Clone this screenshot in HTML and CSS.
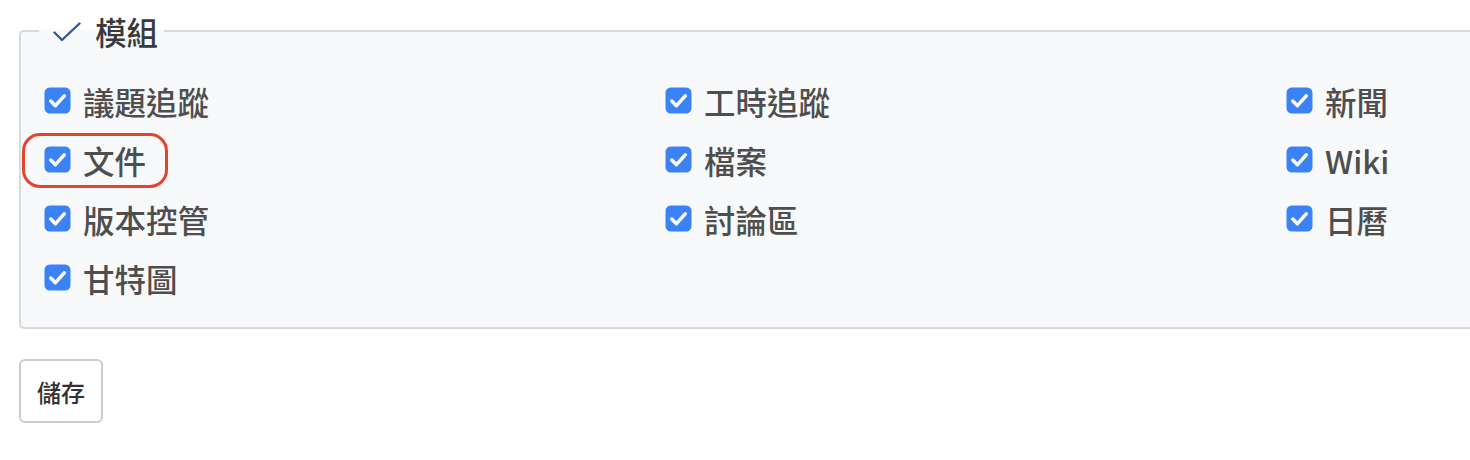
FILE: index.html
```html
<!DOCTYPE html>
<html lang="zh-Hant">
<head>
<meta charset="utf-8">
<title>模組</title>
<link rel="stylesheet" href="styles.css">
</head>
<body>
<form class="page">
  <fieldset class="box">
    <legend class="legend">
      <svg class="legend-icon" width="28" height="20" viewBox="0 0 28 20"><path d="M1.5 10.5 L9 18 L26.5 1.5" fill="none" stroke="#2d5d8e" stroke-width="2.4" stroke-linecap="round" stroke-linejoin="round"/></svg>
      <span>模組</span>
    </legend>
    <div class="grid">
      <label class="item"><svg class="cb" viewBox="0 0 26 26"><rect x="0.5" y="0.5" width="25" height="25" rx="5" fill="#3a82f5"/><path d="M6.5 13.5 L11 18 L19.5 8.5" fill="none" stroke="#fff" stroke-width="3.4" stroke-linecap="round" stroke-linejoin="round"/></svg><span>議題追蹤</span></label>
      <label class="item"><svg class="cb" viewBox="0 0 26 26"><rect x="0.5" y="0.5" width="25" height="25" rx="5" fill="#3a82f5"/><path d="M6.5 13.5 L11 18 L19.5 8.5" fill="none" stroke="#fff" stroke-width="3.4" stroke-linecap="round" stroke-linejoin="round"/></svg><span>工時追蹤</span></label>
      <label class="item"><svg class="cb" viewBox="0 0 26 26"><rect x="0.5" y="0.5" width="25" height="25" rx="5" fill="#3a82f5"/><path d="M6.5 13.5 L11 18 L19.5 8.5" fill="none" stroke="#fff" stroke-width="3.4" stroke-linecap="round" stroke-linejoin="round"/></svg><span>新聞</span></label>
      <label class="item"><svg class="cb" viewBox="0 0 26 26"><rect x="0.5" y="0.5" width="25" height="25" rx="5" fill="#3a82f5"/><path d="M6.5 13.5 L11 18 L19.5 8.5" fill="none" stroke="#fff" stroke-width="3.4" stroke-linecap="round" stroke-linejoin="round"/></svg><span>文件</span><span class="mark"></span></label>
      <label class="item"><svg class="cb" viewBox="0 0 26 26"><rect x="0.5" y="0.5" width="25" height="25" rx="5" fill="#3a82f5"/><path d="M6.5 13.5 L11 18 L19.5 8.5" fill="none" stroke="#fff" stroke-width="3.4" stroke-linecap="round" stroke-linejoin="round"/></svg><span>檔案</span></label>
      <label class="item"><svg class="cb" viewBox="0 0 26 26"><rect x="0.5" y="0.5" width="25" height="25" rx="5" fill="#3a82f5"/><path d="M6.5 13.5 L11 18 L19.5 8.5" fill="none" stroke="#fff" stroke-width="3.4" stroke-linecap="round" stroke-linejoin="round"/></svg><span>Wiki</span></label>
      <label class="item"><svg class="cb" viewBox="0 0 26 26"><rect x="0.5" y="0.5" width="25" height="25" rx="5" fill="#3a82f5"/><path d="M6.5 13.5 L11 18 L19.5 8.5" fill="none" stroke="#fff" stroke-width="3.4" stroke-linecap="round" stroke-linejoin="round"/></svg><span>版本控管</span></label>
      <label class="item"><svg class="cb" viewBox="0 0 26 26"><rect x="0.5" y="0.5" width="25" height="25" rx="5" fill="#3a82f5"/><path d="M6.5 13.5 L11 18 L19.5 8.5" fill="none" stroke="#fff" stroke-width="3.4" stroke-linecap="round" stroke-linejoin="round"/></svg><span>討論區</span></label>
      <label class="item"><svg class="cb" viewBox="0 0 26 26"><rect x="0.5" y="0.5" width="25" height="25" rx="5" fill="#3a82f5"/><path d="M6.5 13.5 L11 18 L19.5 8.5" fill="none" stroke="#fff" stroke-width="3.4" stroke-linecap="round" stroke-linejoin="round"/></svg><span>日曆</span></label>
      <label class="item"><svg class="cb" viewBox="0 0 26 26"><rect x="0.5" y="0.5" width="25" height="25" rx="5" fill="#3a82f5"/><path d="M6.5 13.5 L11 18 L19.5 8.5" fill="none" stroke="#fff" stroke-width="3.4" stroke-linecap="round" stroke-linejoin="round"/></svg><span>甘特圖</span></label>
    </div>
  </fieldset>
  <button type="button" class="save">儲存</button>
</form>
</body>
</html>
```

FILE: styles.css
```css
html, body {
  margin: 0;
  padding: 0;
  background: #ffffff;
}
body {
  font-family: "Noto Sans CJK TC", "Noto Sans", sans-serif;
  color: #4a4a4a;
}
.page {
  padding: 11px 0 0 19px;
  margin: 0;
}
.box {
  width: 1451px;
  margin: 0;
  padding: 20px 0 20px 23px;
  border: 2px solid #d6d9de;
  border-right: 0;
  border-radius: 5px 0 0 5px;
  background: #f8f9fb;
  box-sizing: border-box;
}
.legend {
  display: flex;
  align-items: center;
  gap: 14px;
  padding: 0 6px 0 14px;
  margin-left: -5px;
  height: 40px;
  font-size: 31.5px;
  font-weight: 500;
  line-height: 40px;
  color: #3a3a3a;
}
.legend-icon {
  display: block;
  margin-top: 2px;
}
.grid {
  display: grid;
  grid-template-columns: 621px 621px 1fr;
  grid-auto-rows: 59px;
}
.item {
  position: relative;
  display: flex;
  align-items: center;
  gap: 12px;
  font-size: 31.5px;
  font-weight: 500;
  line-height: 40px;
  color: #4e4e4e;
}
.cb {
  width: 27px;
  height: 27px;
  flex: none;
}
.mark {
  position: absolute;
  left: -22px;
  top: 3px;
  width: 146px;
  height: 55px;
  box-sizing: border-box;
  border: 3.5px solid #e5432c;
  border-radius: 18px;
}
.save {
  display: block;
  margin-top: 30px;
  width: 84px;
  height: 64px;
  padding: 0;
  border: 2px solid #cccccc;
  border-radius: 6px;
  background: #ffffff;
  font-family: "Noto Sans CJK TC", "Noto Sans", sans-serif;
  font-size: 24px;
  font-weight: 500;
  color: #333333;
}
```
